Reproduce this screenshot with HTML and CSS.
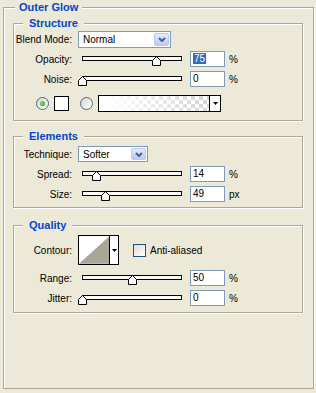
FILE: index.html
```html
<!DOCTYPE html>
<html lang="en">
<head>
    <meta charset="UTF-8">
    <meta name="viewport" content="width=device-width, initial-scale=1.0">
    <title>Outer Glow</title>
    <link rel="stylesheet" href="styles.css">
</head>
<body>
    <fieldset class="group outer">
        <legend>Outer Glow</legend>

        <fieldset class="group section structure">
            <legend>Structure</legend>
            <div class="row">
                <span class="label">Blend Mode:</span>
                <div class="combo blend">
                    <span class="combo-text">Normal</span>
                    <span class="combo-btn"><svg width="8" height="5" viewBox="0 0 8 5"><polyline points="1,1 4,4 7,1" fill="none" stroke="#4d6185" stroke-width="2"/></svg></span>
                </div>
            </div>
            <div class="row">
                <span class="label">Opacity:</span>
                <div class="slider" style="--pos: 0.75">
                    <div class="track"></div>
                    <svg class="thumb" width="9" height="10" viewBox="0 0 9 10"><path d="M0.5 9.5 V4.5 L4.5 0.5 L8.5 4.5 V9.5 Z" fill="#fff" stroke="#000"/></svg>
                </div>
                <div class="field"><span class="selected">75</span></div>
                <span class="unit">%</span>
            </div>
            <div class="row">
                <span class="label">Noise:</span>
                <div class="slider" style="--pos: 0">
                    <div class="track"></div>
                    <svg class="thumb" width="9" height="10" viewBox="0 0 9 10"><path d="M0.5 9.5 V4.5 L4.5 0.5 L8.5 4.5 V9.5 Z" fill="#fff" stroke="#000"/></svg>
                </div>
                <div class="field">0</div>
                <span class="unit">%</span>
            </div>
            <div class="row color-row">
                <span class="radio checked"></span>
                <span class="swatch"></span>
                <span class="radio second"></span>
                <div class="gradient">
                    <div class="gradient-preview"></div>
                    <span class="mini-arrow"><svg width="5" height="3" viewBox="0 0 5 3"><polygon points="0,0 5,0 2.5,3" fill="#000"/></svg></span>
                </div>
            </div>
        </fieldset>

        <fieldset class="group section elements">
            <legend>Elements</legend>
            <div class="row">
                <span class="label">Technique:</span>
                <div class="combo technique">
                    <span class="combo-text">Softer</span>
                    <span class="combo-btn"><svg width="8" height="5" viewBox="0 0 8 5"><polyline points="1,1 4,4 7,1" fill="none" stroke="#4d6185" stroke-width="2"/></svg></span>
                </div>
            </div>
            <div class="row">
                <span class="label">Spread:</span>
                <div class="slider" style="--pos: 0.14">
                    <div class="track"></div>
                    <svg class="thumb" width="9" height="10" viewBox="0 0 9 10"><path d="M0.5 9.5 V4.5 L4.5 0.5 L8.5 4.5 V9.5 Z" fill="#fff" stroke="#000"/></svg>
                </div>
                <div class="field">14</div>
                <span class="unit">%</span>
            </div>
            <div class="row">
                <span class="label">Size:</span>
                <div class="slider" style="--pos: 0.23">
                    <div class="track"></div>
                    <svg class="thumb" width="9" height="10" viewBox="0 0 9 10"><path d="M0.5 9.5 V4.5 L4.5 0.5 L8.5 4.5 V9.5 Z" fill="#fff" stroke="#000"/></svg>
                </div>
                <div class="field">49</div>
                <span class="unit">px</span>
            </div>
        </fieldset>

        <fieldset class="group section quality">
            <legend>Quality</legend>
            <div class="row contour-row">
                <span class="label">Contour:</span>
                <div class="contour">
                    <svg class="contour-preview" width="31" height="28" viewBox="0 0 31 28"><rect width="31" height="28" fill="#fff"/><polygon points="0,28 31,0 31,28" fill="#a9a597"/></svg>
                    <span class="mini-arrow"><svg width="5" height="3" viewBox="0 0 5 3"><polygon points="0,0 5,0 2.5,3" fill="#000"/></svg></span>
                </div>
                <span class="checkbox"></span>
                <span class="check-label">Anti-aliased</span>
            </div>
            <div class="row range-row">
                <span class="label">Range:</span>
                <div class="slider" style="--pos: 0.5">
                    <div class="track"></div>
                    <svg class="thumb" width="9" height="10" viewBox="0 0 9 10"><path d="M0.5 9.5 V4.5 L4.5 0.5 L8.5 4.5 V9.5 Z" fill="#fff" stroke="#000"/></svg>
                </div>
                <div class="field">50</div>
                <span class="unit">%</span>
            </div>
            <div class="row">
                <span class="label">Jitter:</span>
                <div class="slider" style="--pos: 0">
                    <div class="track"></div>
                    <svg class="thumb" width="9" height="10" viewBox="0 0 9 10"><path d="M0.5 9.5 V4.5 L4.5 0.5 L8.5 4.5 V9.5 Z" fill="#fff" stroke="#000"/></svg>
                </div>
                <div class="field">0</div>
                <span class="unit">%</span>
            </div>
        </fieldset>
    </fieldset>
</body>
</html>
```

FILE: styles.css
```css
body {
    margin: 0;
    background-color: #ece9d8;
    font-family: "Liberation Sans", Arial, sans-serif;
    font-size: 10px;
    color: #000;
}

/* etched group boxes */
.group {
    margin: 0;
    padding: 0;
    min-width: 0;
    border: 1px solid #aca899;
    box-shadow: 1px 1px 0 #fff, inset 1px 1px 0 #fff;
}
.group > legend {
    font-size: 11px;
    font-weight: bold;
    line-height: 12px;
    color: #0046d5;
    background-color: #ece9d8;
}
.outer {
    margin: 1px 0 0 3px;
    width: 311px;
    height: 388px;
    box-sizing: border-box;
    padding: 4px 10px 0 9px;
}
.outer > legend {
    margin-left: 2px;
    padding: 0 4px;
}
.section > legend {
    margin-left: 9px;
    padding: 0 6px;
}
.structure { padding-bottom: 7px; }
.elements { margin-top: 9px; padding: 2px 0 3px; }
.quality { margin-top: 11px; padding: 4px 0 4px; }

/* rows */
.row {
    display: flex;
    align-items: center;
    height: 20px;
}
.label {
    width: 58px;
    margin-right: 6px;
    text-align: right;
    white-space: nowrap;
}
.color-row { margin-top: 4px; padding-left: 22px; }
.contour-row { height: 30px; }
.range-row { margin-top: 3px; }

/* combo boxes */
.combo {
    display: flex;
    align-items: center;
    box-sizing: border-box;
    height: 17px;
    border: 1px solid #7f9db9;
    background-color: #fff;
    padding: 1px;
}
.blend { width: 93px; }
.technique { width: 70px; height: 16px; }
.combo-text {
    flex: 1;
    padding-left: 3px;
}
.combo-btn {
    display: flex;
    align-items: center;
    justify-content: center;
    box-sizing: border-box;
    width: 15px;
    height: 100%;
    border: 1px solid #b9cbf3;
    border-radius: 2px;
    background: linear-gradient(#e3ebfe, #b7caf5);
}

/* sliders */
.slider {
    position: relative;
    width: 108px;
    height: 16px;
    margin-right: 4px;
}
.track {
    box-sizing: border-box;
    width: 100px;
    height: 5px;
    margin: 5px 0 0 4px;
    border: 1px solid #000;
    background-color: #fbfaf6;
}
.thumb {
    position: absolute;
    top: 5px;
    left: calc(4px + var(--pos) * 99px - 4px);
}

/* number fields */
.field {
    box-sizing: border-box;
    width: 35px;
    height: 16px;
    border: 1px solid #7f9db9;
    background-color: #fff;
    padding-left: 2px;
    line-height: 14px;
}
.selected {
    background-color: #316ac5;
    color: #fff;
    padding: 0 1px;
}
.unit { margin-left: 4px; }

/* colour row */
.radio {
    position: relative;
    box-sizing: border-box;
    width: 13px;
    height: 13px;
    border: 1px solid #3f6a94;
    border-radius: 50%;
    background: linear-gradient(135deg, #d6d6ce, #fff);
}
.radio.checked::after {
    content: "";
    position: absolute;
    left: 3px;
    top: 3px;
    width: 5px;
    height: 5px;
    border-radius: 50%;
    background: radial-gradient(circle at 40% 40%, #7be27b, #1e9a1e);
}
.radio.second { margin-left: 11px; }
.swatch {
    box-sizing: border-box;
    width: 15px;
    height: 15px;
    margin-left: 5px;
    border: 1px solid #000;
    background-color: #fff;
}
.gradient {
    display: flex;
    box-sizing: border-box;
    width: 123px;
    height: 17px;
    margin-left: 5px;
    border: 1px solid #000;
}
.gradient-preview {
    flex: 1;
    background:
        linear-gradient(to right, #fff 5%, rgba(255, 255, 255, 0) 100%),
        conic-gradient(#d6d6d6 25%, #fff 0 50%, #d6d6d6 0 75%, #fff 0) 0 0 / 8px 8px;
}
.mini-arrow {
    display: flex;
    align-items: center;
    justify-content: center;
    width: 10px;
    border-left: 1px solid #000;
    background-color: #fff;
}

/* contour */
.contour {
    display: flex;
    box-sizing: border-box;
    width: 41px;
    height: 30px;
    border: 1px solid #000;
}
.contour-preview { display: block; }
.contour .mini-arrow { width: 8px; }
.checkbox {
    box-sizing: border-box;
    width: 13px;
    height: 13px;
    margin-left: 14px;
    border: 1px solid #1c5180;
    background: linear-gradient(135deg, #dcdcd7, #fff);
}
.check-label { margin-left: 4px; }
```
